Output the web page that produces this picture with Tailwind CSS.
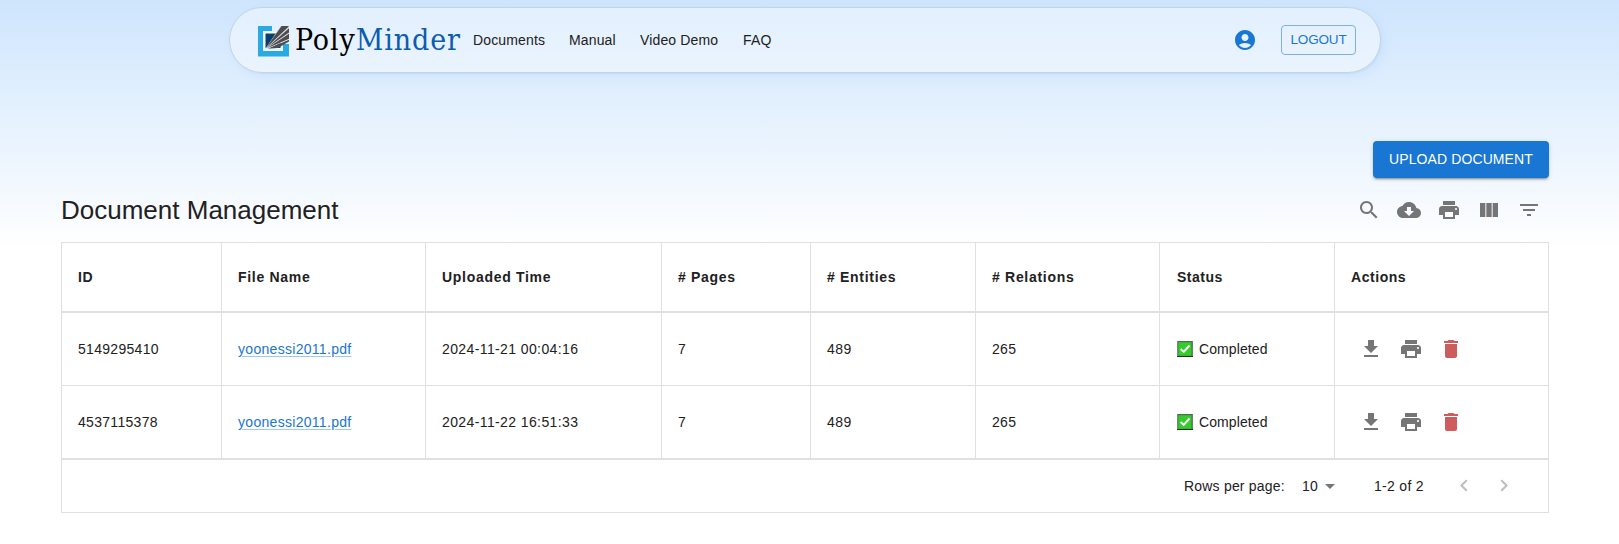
<!DOCTYPE html>
<html lang="en">
<head>
<meta charset="utf-8">
<title>PolyMinder</title>
<script src="https://cdn.jsdelivr.net/npm/@tailwindcss/browser@4"></script>
</head>
<body class="h-[544px] overflow-hidden bg-white font-['Liberation_Sans',Arial,sans-serif] text-sm text-[#212121]">
<svg class="hidden" xmlns="http://www.w3.org/2000/svg">
  <symbol id="print" viewBox="0 0 24 24"><path d="M19 8H5c-1.66 0-3 1.34-3 3v6h4v4h12v-4h4v-6c0-1.66-1.34-3-3-3zm-3 11H8v-5h8v5zm3-7c-.55 0-1-.45-1-1s.45-1 1-1 1 .45 1 1-.45 1-1 1zm-1-9H6v4h12V3z"/></symbol>
  <symbol id="download" viewBox="0 0 24 24"><path d="M19 9h-4V3H9v6H5l7 7 7-7zM5 18v2h14v-2H5z"/></symbol>
  <symbol id="delete" viewBox="0 0 24 24"><path d="M6 19c0 1.1.9 2 2 2h8c1.1 0 2-.9 2-2V7H6v12zM19 4h-3.5l-1-1h-5l-1 1H5v2h14V4z"/></symbol>
  <symbol id="check" viewBox="0 0 16 16"><path fill="#4d6b4d" d="M0 0h16v16H0z"/><path fill="#9a9a9a" d="M0 0h.6v16H0zM15.6 0h.4v16h-.4z"/><path fill="#1d3a1d" d="M0 15h16v1H0z"/><path fill="#33cc2b" d="M1.3 1.2h13.2v13.6H1.3z"/><path d="M3.7 8l3 2.9 5.8-6.4" fill="none" stroke="#fff" stroke-width="2"/></symbol>
</svg>
<div class="flex h-[544px] flex-col bg-[linear-gradient(180deg,#cee5fd_0px,#ffffff_250px)]">
  <header class="mt-[7px] ml-[229px] flex h-[66px] w-[1152px] shrink-0 items-center rounded-full border border-[#c7d3e2] bg-white/40 pr-[24px] pl-[28px] shadow-[0_0_1px_rgba(85,166,246,0.1),1px_1.5px_2px_-1px_rgba(85,166,246,0.15),4px_4px_12px_-2.5px_rgba(85,166,246,0.15)]">
    <svg class="mt-[2px] size-[31px]" viewBox="0 0 31 31">
      <path fill="#29abe2" d="M0 0h14v5H5v20h20v-7h6v12.500H0z"/>
      <path fill="#fff" d="M6 6h17v17H6z"/>
      <path fill="#063f70" d="M7.500 7.500h15v14.500h-15z"/>
      <path fill="#dfe5ea" d="M7.500 22.500L18 7 22 0h9v13L10 23z"/>
      <path fill="#4d4d4f" d="M8 22L23.500 0H31L29.500 1.800zM8.500 22L31 2.200v4.300zM9 22.300L31 7.800v5z"/>
      <path fill="#4d4d4f" d="M10 22.700L31 13.800v1.700L20 22z"/>
    </svg>
    <span class="ml-[6px] w-[166px] font-['DejaVu_Serif_Condensed','DejaVu_Serif',serif] text-[30px] leading-[40px] tracking-[0.9px] whitespace-nowrap text-black">Poly<span class="text-[#0c5cb0]">Minder</span></span>
    <nav class="ml-[12px] flex gap-[24px] leading-5 tracking-[0.15px] whitespace-nowrap">
      <a class="w-[72px]">Documents</a><a class="w-[47px]">Manual</a><a class="w-[79px]">Video Demo</a><a>FAQ</a>
    </nav>
    <svg class="ml-auto size-6 fill-[#1976d2]" viewBox="0 0 24 24"><path d="M12 2C6.480 2 2 6.480 2 12s4.480 10 10 10 10-4.480 10-10S17.520 2 12 2zm0 4c1.930 0 3.500 1.570 3.500 3.500S13.930 13 12 13s-3.500-1.570-3.500-3.500S10.070 6 12 6zm0 14c-2.030 0-4.430-.820-6.140-2.880C7.550 15.800 9.680 15 12 15s4.450.800 6.140 2.120C16.430 19.180 14.030 20 12 20z"/></svg>
    <button class="ml-[24px] flex h-[30px] w-[75px] items-center justify-center rounded-[4px] border border-[#7eb0e6] text-[13.5px] leading-[26px] tracking-[-0.15px] text-[#1976d2]">LOGOUT</button>
  </header>

  <main class="mt-[68px] ml-[61px] flex w-[1488px] flex-col">
    <button class="flex h-[37px] w-[176px] items-center justify-center self-end rounded-[4px] bg-[#1976d2] pb-px tracking-[0.1px] whitespace-nowrap text-white shadow-[0_3px_1px_-2px_rgba(0,0,0,0.2),0_2px_2px_0_rgba(0,0,0,0.14),0_1px_5px_0_rgba(0,0,0,0.12)]">UPLOAD DOCUMENT</button>
    <div class="flex h-[64px] items-center">
      <h1 class="pt-[2px] text-[26px] whitespace-nowrap">Document Management</h1>
      <div class="ml-auto flex gap-4 pr-2 fill-[#757575]">
        <svg class="size-6" viewBox="0 0 24 24"><path d="M15.500 14h-.790l-.280-.270C15.410 12.590 16 11.110 16 9.500 16 5.910 13.090 3 9.500 3S3 5.910 3 9.500 5.910 16 9.500 16c1.610 0 3.090-.590 4.230-1.570l.270.280v.790l5 4.990L20.490 19l-4.990-5zm-6 0C7.010 14 5 11.990 5 9.500S7.010 5 9.500 5 14 7.010 14 9.500 11.990 14 9.500 14z"/></svg>
        <svg class="size-6" viewBox="0 0 24 24"><path d="M19.350 10.040C18.670 6.590 15.640 4 12 4 9.110 4 6.600 5.640 5.350 8.040 2.340 8.360 0 10.910 0 14c0 3.310 2.690 6 6 6h13c2.760 0 5-2.240 5-5 0-2.640-2.050-4.780-4.650-4.960zM17 13l-5 5-5-5h3V9h4v4h3z"/></svg>
        <svg class="size-6"><use href="#print"/></svg>
        <svg class="size-6" viewBox="0 0 24 24"><path d="M14.670 5v14H9.330V5h5.340zm1 14H21V5h-5.330v14zm-7.340 0V5H3v14h5.330z"/></svg>
        <svg class="size-6" viewBox="0 0 24 24"><path d="M10 18h4v-2h-4v2zM3 6v2h18V6H3zm3 7h12v-2H6v2z"/></svg>
      </div>
    </div>

    <section class="border border-[#e0e0e0] bg-white whitespace-nowrap">
      <div class="grid h-[70px] grid-cols-[160px_204px_236px_149px_165px_184px_175px_213px] border-b-2 border-[#e0e0e0] font-bold tracking-[0.7px] *:flex *:items-center *:border-[#e0e0e0] *:pl-4">
        <div class="border-r">ID</div><div class="border-r">File Name</div><div class="border-r">Uploaded Time</div><div class="border-r"># Pages</div><div class="border-r"># Entities</div><div class="border-r"># Relations</div><div class="border-r"><span class="ml-px tracking-[0.5px]">Status</span></div><div class="tracking-[0.55px]">Actions</div>
      </div>
      <div class="grid h-[73px] grid-cols-[160px_204px_236px_149px_165px_184px_175px_213px] border-b border-[#e0e0e0] tracking-[0.3px] *:flex *:items-center *:border-[#e0e0e0] *:pl-4">
        <div class="border-r">5149295410</div>
        <div class="border-r"><a class="text-[#1976d2] underline decoration-[#1976d2]/40 underline-offset-2">yoonessi2011.pdf</a></div>
        <div class="border-r tracking-[0.39px]">2024-11-21 00:04:16</div><div class="border-r">7</div><div class="border-r tracking-[0.5px]">489</div><div class="border-r">265</div>
        <div class="gap-[6px] border-r tracking-[0.1px]"><svg class="ml-px size-4"><use href="#check"/></svg>Completed</div>
        <div class="gap-4 fill-[#757575]"><svg class="ml-2 size-6"><use href="#download"/></svg><svg class="size-6"><use href="#print"/></svg><svg class="size-6 fill-[#cd5c5c]"><use href="#delete"/></svg></div>
      </div>
      <div class="grid h-[74px] grid-cols-[160px_204px_236px_149px_165px_184px_175px_213px] border-b-2 border-[#e0e0e0] tracking-[0.3px] *:flex *:items-center *:border-[#e0e0e0] *:pl-4">
        <div class="border-r">4537115378</div>
        <div class="border-r"><a class="text-[#1976d2] underline decoration-[#1976d2]/40 underline-offset-2">yoonessi2011.pdf</a></div>
        <div class="border-r tracking-[0.39px]">2024-11-22 16:51:33</div><div class="border-r">7</div><div class="border-r tracking-[0.5px]">489</div><div class="border-r">265</div>
        <div class="gap-[6px] border-r tracking-[0.1px]"><svg class="ml-px size-4"><use href="#check"/></svg>Completed</div>
        <div class="gap-4 fill-[#757575]"><svg class="ml-2 size-6"><use href="#download"/></svg><svg class="size-6"><use href="#print"/></svg><svg class="size-6 fill-[#cd5c5c]"><use href="#delete"/></svg></div>
      </div>
      <div class="flex h-[52px] items-center justify-end pr-[32px] tracking-[0.2px]">
        <span class="w-[118px]">Rows per page:</span>
        <span class="w-[16px]">10</span>
        <svg class="mr-[32px] size-6 fill-[#757575]" viewBox="0 0 24 24"><path d="M7 10l5 5 5-5z"/></svg>
        <span class="w-[78px] tracking-[0.3px]">1-2 of 2</span>
        <svg class="mr-4 size-6 fill-[#bdbdbd]" viewBox="0 0 24 24"><path d="M15.410 16.090l-4.580-4.590 4.580-4.590L14 5.500l-6 6 6 6z"/></svg>
        <svg class="size-6 fill-[#bdbdbd]" viewBox="0 0 24 24"><path d="M8.590 16.090l4.580-4.590-4.580-4.590L10 5.500l6 6-6 6z"/></svg>
      </div>
    </section>
  </main>
</div>
</body>
</html>
